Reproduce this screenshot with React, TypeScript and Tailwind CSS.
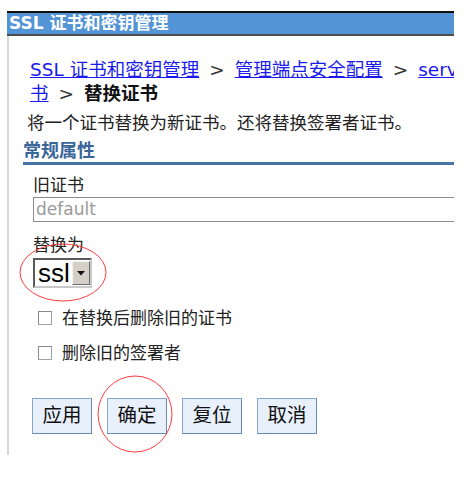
const latin = '"DejaVu Sans", "Noto Sans CJK SC", sans-serif';

function Checkbox({ label }: { label: string }) {
  return (
    <div className="flex h-[20px] items-center pl-[15px] leading-[20px] text-[17px] text-[#222]">
      <span className="mr-[10px] box-border h-[14px] w-[14px] border border-[#a0a0a0] border-l-[#8a8a8a] border-t-[#8a8a8a] bg-white" />
      <span>{label}</span>
    </div>
  );
}

function Button({ label, circled }: { label: string; circled?: boolean }) {
  return (
    <div className="relative">
      <button className="box-border flex h-[36px] w-[60px] items-center justify-center border border-[#88a6cc] border-b-[#6a88b0] border-r-[#6a88b0] bg-[#e8f0fc] text-[19.5px] text-[#111]">
        {label}
      </button>
      {circled && (
        <svg
          className="pointer-events-none absolute left-[-10px] top-[-23px]"
          width="76"
          height="78"
          viewBox="0 0 76 78"
        >
          <ellipse cx="38" cy="39" rx="37" ry="38" fill="none" stroke="#ff3b3b" strokeWidth="1" />
        </svg>
      )}
    </div>
  );
}

export default function App() {
  return (
    <div className="h-[482px] w-[469px] bg-white pl-[7px] pt-[11px]" style={{ fontFamily: latin }}>
      <div className="w-[447px]">
        {/* window title */}
        <div className="box-border h-[25px] border-b-2 border-t-2 border-b-[#4d4d4d] border-t-[#111] bg-[#5294d6] pl-[2px] text-[17px] font-bold leading-[21px] text-white">
          SSL 证书和密钥管理
        </div>

        <div className="box-border h-[419px] overflow-hidden border-l-2 border-[#d6d6d6] pl-[14px] pt-[22px]">
          {/* breadcrumb */}
          <div className="ml-[7px] h-[24px] overflow-hidden whitespace-nowrap text-[18.5px] leading-[24px]">
            <a className="text-[#1a1aee] underline">SSL 证书和密钥管理</a>
            <span className="mx-[10px] text-[#333]">&gt;</span>
            <a className="text-[#1a1aee] underline">管理端点安全配置</a>
            <span className="mx-[10px] text-[#333]">&gt;</span>
            <a className="text-[#1a1aee] underline">server</a>
          </div>
          <div className="ml-[7px] h-[24px] whitespace-nowrap text-[18.5px] leading-[24px]">
            <a className="text-[#1a1aee] underline">书</a>
            <span className="mx-[10px] text-[#333]">&gt;</span>
            <span className="font-bold text-[#111]">替换证书</span>
          </div>

          <div className="ml-[4px] mt-[5px] text-[17.5px] leading-[24px] text-[#222]">
            将一个证书替换为新证书。还将替换签署者证书。
          </div>

          {/* section */}
          <div className="mt-[4px] border-b-[3px] border-[#4673a8] text-[18px] font-bold leading-[23px] text-[#3a6699]">
            常规属性
          </div>

          <div className="pl-[10px]">
            <div className="mt-[10px] text-[17px] leading-[20px] text-[#222]">旧证书</div>
            <div className="mt-[2px] box-border flex h-[25px] w-[460px] items-center border border-[#8c8c8c] pl-[2px] text-[17px] text-[#9a9a9a]">
              default
            </div>

            <div className="mt-[13px] text-[17px] leading-[20px] text-[#222]">替换为</div>
            <div className="relative mt-[3px] w-[59px]">
              <div className="box-border flex h-[30px] w-[59px] items-center border-2 border-[#5a5a5a] border-b-[#c8c8c8] border-r-[#c8c8c8] bg-white">
                <span
                  className="ml-[3px] flex-1 text-[26px] leading-[26px] text-black"
                  style={{ fontFamily: '"Liberation Sans", Arial, sans-serif' }}
                >
                  ssl
                </span>
                <span className="box-border flex h-[24px] w-[18px] items-center justify-center border border-[#f4f4f4] border-b-[#6d6d6d] border-r-[#6d6d6d] bg-[#d4d0c8]">
                  <svg width="8" height="5" viewBox="0 0 8 5">
                    <path d="M0 0h8L4 4.5z" fill="#111" />
                  </svg>
                </span>
              </div>
              <svg
                className="pointer-events-none absolute left-[-14px] top-[-15px]"
                width="88"
                height="59"
                viewBox="0 0 88 59"
              >
                <ellipse cx="44" cy="29.5" rx="43" ry="28.5" fill="none" stroke="#ff3b3b" strokeWidth="1" />
              </svg>
            </div>
          </div>

          <div className="mt-[20px]">
            <Checkbox label="在替换后删除旧的证书" />
          </div>
          <div className="mt-[15px]">
            <Checkbox label="删除旧的签署者" />
          </div>

          <div className="ml-[9px] mt-[35px] flex gap-[15px]">
            <Button label="应用" />
            <Button label="确定" circled />
            <Button label="复位" />
            <Button label="取消" />
          </div>
        </div>
      </div>
    </div>
  );
}
